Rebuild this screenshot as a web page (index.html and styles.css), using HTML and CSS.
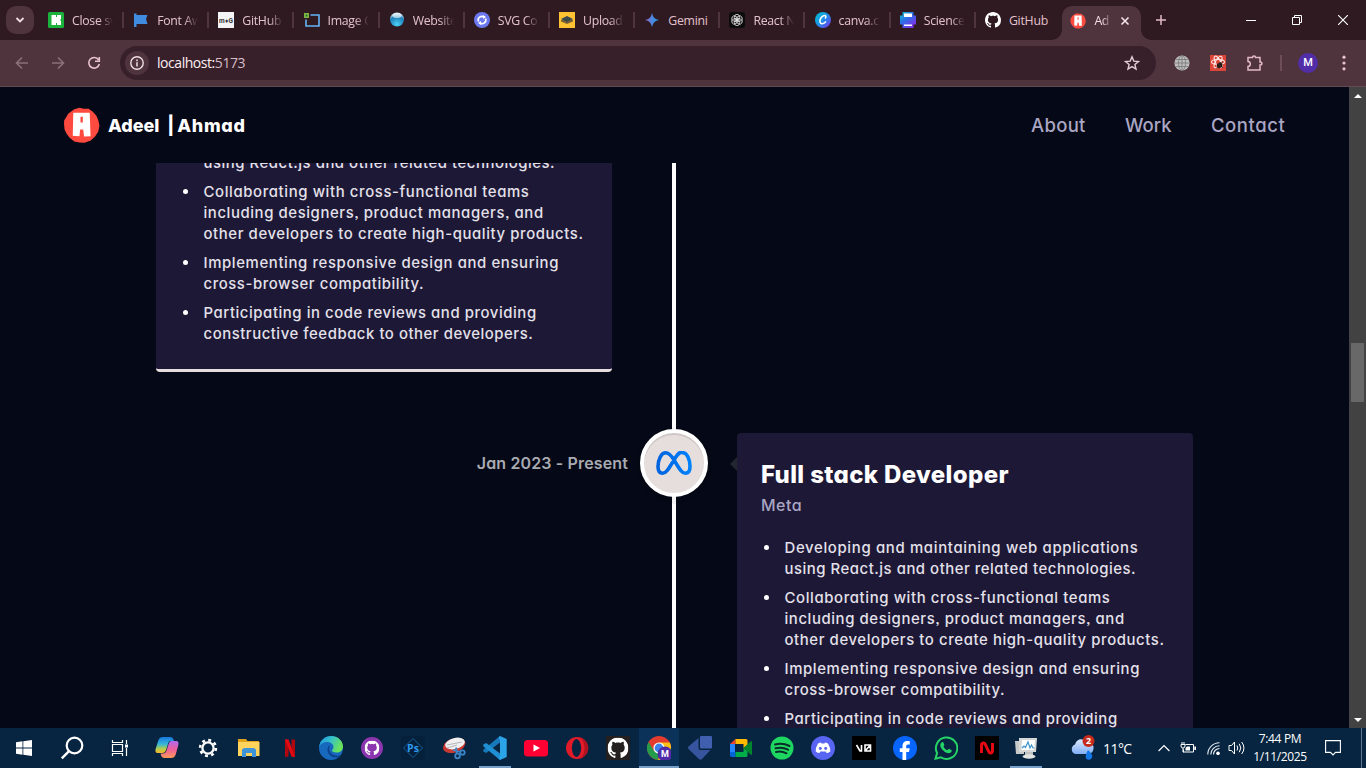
FILE: index.html
```html
<!DOCTYPE html>
<html lang="en">
<head>
<meta charset="utf-8">
<title>Adeel | Ahmad</title>
<link rel="stylesheet" href="styles.css">
</head>
<body>
<svg width="0" height="0" class="defs">
  <defs>
    <symbol id="gh" viewBox="0 0 16 16"><path fill="currentColor" d="M8 0C3.58 0 0 3.58 0 8c0 3.54 2.29 6.53 5.47 7.59.4.07.55-.17.55-.38 0-.19-.01-.82-.01-1.49-2.01.37-2.53-.49-2.69-.94-.09-.23-.48-.94-.82-1.13-.28-.15-.68-.52-.01-.53.63-.01 1.08.58 1.23.82.72 1.21 1.87.87 2.33.66.07-.52.28-.87.51-1.07-1.78-.2-3.64-.89-3.64-3.95 0-.87.31-1.59.82-2.15-.08-.2-.36-1.02.08-2.12 0 0 .67-.21 2.2.82.64-.18 1.32-.27 2-.27s1.36.09 2 .27c1.53-1.04 2.2-.82 2.2-.82.44 1.1.16 1.92.08 2.12.51.56.82 1.27.82 2.15 0 3.07-1.87 3.75-3.65 3.95.29.25.54.73.54 1.48 0 1.07-.01 1.93-.01 2.2 0 .21.15.46.55.38A8.01 8.01 0 0 0 16 8c0-4.42-3.58-8-8-8z"/></symbol>
    <symbol id="logo" viewBox="0 0 36 36"><path fill="#ff4a3f" d="M11 2.200L16 .8l4 .8 5 .2 4 2.700 3.500 4 1.800 4.500 1.200 5-1.200 6-3.300 5-4 3.500-6 2.300-5-.2-5-1.100-4.500-3.500-3-4L1.500 22 1 16l.2-3 1.600-2.500 2.200-4z"/><path fill="#fff" fill-rule="evenodd" d="M10 5.600L26 5.500 26.800 28.500 20.500 28.800 19.700 22H16.700L16 28.500 9.500 28zM17 9.500V15H19.300V9.500z"/></symbol>
    <linearGradient id="canva" x2="1" y2="1"><stop stop-color="#00c4cc"/><stop offset=".5" stop-color="#1f8fe8"/><stop offset="1" stop-color="#7d2ae8"/></linearGradient>
    <linearGradient id="sci" x2=".8" y2="1"><stop stop-color="#10c9c8"/><stop offset=".45" stop-color="#2b6fe8"/><stop offset="1" stop-color="#8a2be8"/></linearGradient>
    <linearGradient id="gem" x1="0" x2="1"><stop stop-color="#9168c0"/><stop offset=".5" stop-color="#4f86e0"/><stop offset="1" stop-color="#1ba1e3"/></linearGradient>
    <radialGradient id="globe" cx=".5" cy=".85" r=".85"><stop stop-color="#4dd2f5"/><stop offset=".65" stop-color="#1c7eb8"/><stop offset="1" stop-color="#e6f6ff"/></radialGradient>
    <linearGradient id="cop1" x2="0" y2="1"><stop stop-color="#1878e0"/><stop offset=".45" stop-color="#35b6d8"/><stop offset=".75" stop-color="#b8cf46"/><stop offset="1" stop-color="#f3b52c"/></linearGradient>
    <linearGradient id="cop2" x2="0" y2="1"><stop stop-color="#b06af0"/><stop offset=".5" stop-color="#ee5f9a"/><stop offset="1" stop-color="#ff9a55"/></linearGradient>
    <linearGradient id="edge1" x2="1" y2=".4"><stop stop-color="#1a8fdc"/><stop offset=".5" stop-color="#35c1c9"/><stop offset="1" stop-color="#6be25a"/></linearGradient>
    <linearGradient id="meta" x2="1"><stop stop-color="#0064e0"/><stop offset=".5" stop-color="#0070ec"/><stop offset="1" stop-color="#0082fb"/></linearGradient>
    <linearGradient id="cloud" x2="0" y2="1"><stop stop-color="#dce9ff"/><stop offset="1" stop-color="#80aef5"/></linearGradient>
  </defs>
</svg>

<div class="tabstrip">
  <button class="tab-search"><svg width="10" height="6" viewBox="0 0 10 6"><path d="M1.500 1L5 4.500 8.500 1" fill="none" stroke="#f3dde4" stroke-width="1.800"/></svg></button>
  <div class="tabs">
    <div class="tab"><svg viewBox="0 0 16 16"><rect width="16" height="16" rx="1.500" fill="#1bb13c"/><path fill="#fff" d="M3.500 3H8v2h1V3h4v4l-1 1 1 1v4H9v-2H8v2H3.500z"/></svg><span>Close sv</span></div>
    <div class="tab"><svg viewBox="0 0 16 16"><path fill="#3f8ce0" d="M1 1.500h2.500V3H14.500l-1.500 4 1.500 5H3.500v3H1z"/></svg><span>Font Aw</span></div>
    <div class="tab"><svg viewBox="0 0 16 16"><rect width="16" height="16" fill="#f4f4f6"/><text x="8" y="10.500" text-anchor="middle" font-size="6.500" font-weight="700" font-family="Roboto" textLength="14" fill="#34343c">m♦G</text></svg><span>GitHub</span></div>
    <div class="tab"><svg viewBox="0 0 16 16"><path fill="none" stroke="#64b5f6" stroke-width="1.600" d="M6.500 3H15v11H2V7.500"/><rect y="1" width="5" height="5" fill="#7cb342"/><rect x="1.700" y="2.700" width="1.600" height="1.600" fill="#263"/></svg><span>Image C</span></div>
    <div class="tab wide"><svg viewBox="0 0 16 16"><circle cx="8" cy="7.500" r="7" fill="url(#globe)"/><ellipse cx="8" cy="3.500" rx="4.500" ry="2.500" fill="#fff" opacity=".65"/></svg><span>Website</span></div>
    <div class="tab"><svg viewBox="0 0 16 16"><circle cx="8" cy="8" r="8" fill="#6c78f2"/><path fill="none" stroke="#fff" stroke-width="1.700" d="M4.500 9.500A3.700 3.700 0 0 1 10 5M11.500 6.500A3.700 3.700 0 0 1 6 11"/><path fill="#fff" d="M9 3l3 2-3 2zM7 9l-3 2 3 2z"/></svg><span>SVG Co</span></div>
    <div class="tab"><svg viewBox="0 0 16 16"><rect width="16" height="16" fill="#fec233"/><path fill="#786333" d="M2 8l6-2 6 2v1.500L8 12 2 9.500z"/><path fill="#3d4a4c" d="M2 7l6-3 6 3-6 3z"/></svg><span>Upload</span></div>
    <div class="tab"><svg viewBox="0 0 16 16"><path fill="url(#gem)" d="M8 1Q9 7 15 8 9 9 8 15 7 9 1 8 7 7 8 1z"/></svg><span>Gemini</span></div>
    <div class="tab"><svg viewBox="0 0 16 16"><rect width="16" height="16" rx="3" fill="#0b0b0c"/><g fill="none" stroke="#e4e4e4" stroke-width=".8"><ellipse cx="8" cy="5.500" rx="2.700" ry="3.200"/><ellipse cx="8" cy="5.500" rx="2.700" ry="3.200" transform="rotate(60 8 8)"/><ellipse cx="8" cy="5.500" rx="2.700" ry="3.200" transform="rotate(120 8 8)"/><ellipse cx="8" cy="5.500" rx="2.700" ry="3.200" transform="rotate(180 8 8)"/><ellipse cx="8" cy="5.500" rx="2.700" ry="3.200" transform="rotate(240 8 8)"/><ellipse cx="8" cy="5.500" rx="2.700" ry="3.200" transform="rotate(300 8 8)"/></g></svg><span>React N</span></div>
    <div class="tab"><svg viewBox="0 0 16 16"><circle cx="8" cy="8" r="8" fill="url(#canva)"/><path fill="none" stroke="#fff" stroke-width="1.500" d="M10 6.500c1.500-1.500 1-3.300-.8-3C6.500 4 4.500 7.500 5 10s3.500 2.500 6-.5"/></svg><span>canva.c</span></div>
    <div class="tab"><svg viewBox="0 0 16 16"><path fill="url(#sci)" d="M2.500 0h11v3.500H16v9h-2.500V16h-11v-3.500H0v-9h2.500z"/><path fill="#fff" d="M4 1.500h8V5H4zM4 12.500h8V14H4z"/></svg><span>Science</span></div>
    <div class="tab"><svg class="white"><use href="#gh"/></svg><span>GitHub</span></div>
    <div class="tab active"><svg><use href="#logo"/></svg><span>Ad</span><svg class="x" viewBox="0 0 10 10"><path d="M1.500 1.500l7 7M8.500 1.500l-7 7" stroke="#f7e3ea" stroke-width="1.600"/></svg></div>
  </div>
  <svg class="plus" viewBox="0 0 12 12"><path d="M6 1v10M1 6h10" stroke="#e4b9c8" stroke-width="1.500"/></svg>
  <div class="win">
    <svg viewBox="0 0 10 10"><path d="M0 5.500h10" stroke="#fff"/></svg>
    <svg viewBox="0 0 10 10"><path d="M.5 2.500h7v7h-7zM2.500 2.500v-2h7v7h-2" fill="none" stroke="#fff"/></svg>
    <svg viewBox="0 0 10 10"><path d="M0 0l10 10M10 0L0 10" stroke="#fff" stroke-width="1.100"/></svg>
  </div>
</div>

<div class="toolbar">
  <svg class="ic dim" viewBox="0 0 16 16"><path d="M14 8H3M8 2.500L2.500 8 8 13.500"/></svg>
  <svg class="ic dim" viewBox="0 0 16 16"><path d="M2 8h11M8 2.500L13.500 8 8 13.500"/></svg>
  <svg class="ic" viewBox="0 0 16 16"><path d="M12.500 4.800A5.300 5.300 0 1 0 13.300 9M13.300 2v4.300H9"/></svg>
  <div class="omnibox">
    <i class="info"><svg viewBox="0 0 16 16"><circle cx="8" cy="8" r="6.200" fill="none" stroke="#f0dfe5" stroke-width="1.400"/><path d="M8 7.200V11.500M8 4.600v1.600" stroke="#f0dfe5" stroke-width="1.500"/></svg></i>
    <span class="url"><b>localhost:</b>5173</span>
    <svg class="star" viewBox="0 0 16 16"><path d="M8 1.800l1.800 4.300 4.700.4-3.600 3 1.100 4.600L8 11.600l-4 2.500 1.100-4.600-3.600-3 4.700-.4z" fill="none" stroke="#e6ccd5" stroke-width="1.400"/></svg>
  </div>
  <svg class="ext" viewBox="0 0 16 16"><circle cx="8" cy="8" r="7.600" fill="#bdbdbd"/><g fill="none" stroke="#777" stroke-width=".8"><ellipse cx="8" cy="8" rx="3.500" ry="7.500"/><path d="M8 0v16M.5 8h15M2 4.500h12M2 11.500h12"/></g></svg>
  <svg class="ext" viewBox="0 0 16 16"><rect width="16" height="16" fill="#dc4437"/><g fill="none" stroke="#ffe9e6" stroke-width="1.100"><ellipse cx="8" cy="7" rx="6.500" ry="2.500"/><ellipse cx="8" cy="7" rx="6.500" ry="2.500" transform="rotate(60 8 7)"/><ellipse cx="8" cy="7" rx="6.500" ry="2.500" transform="rotate(120 8 7)"/></g><path d="M7 9l3.500-2 2 2-.5 3-3 1.500-2-1.500z" fill="#2a1a1a"/><path d="M6 13.500l7-7M6.500 9l6.500 3.500" stroke="#2a1a1a" stroke-width=".8"/></svg>
  <svg class="ext puzzle" viewBox="0 0 16 16"><path d="M1 2.500h4.500c0-2 3-2 3 0H13v4.500c2.500 0 2.500 3 0 3V15H1v-3.500c3 0 3-5 0-5z" fill="none" stroke="#e4b9c8" stroke-width="1.500"/></svg>
  <i class="sep"></i>
  <span class="avatar">M</span>
  <svg class="dots" viewBox="0 0 4 16"><circle cx="2" cy="2.200" r="1.600"/><circle cx="2" cy="8" r="1.600"/><circle cx="2" cy="13.800" r="1.600"/></svg>
</div>

<div class="viewport">
  <div class="page">
    <header class="site">
      <svg class="mark"><use href="#logo"/></svg>
      <p class="name"><span>Adeel&nbsp; </span>| <b>Ahmad</b></p>
      <nav><a class="n1">About</a><a class="n2">Work</a><a class="n3">Contact</a></nav>
    </header>
    <main class="timeline">
      <div class="row first">
        <article class="card">
          <ul>
            <li><span class="l2">using React.js and other related technologies.</span></li>
            <li><span class="l3">Collaborating with cross-functional teams</span><span class="l4">including designers, product managers, and</span><span class="l5">other developers to create high-quality products.</span></li>
            <li><span class="l6">Implementing responsive design and ensuring</span><span class="l7">cross-browser compatibility.</span></li>
            <li><span class="l8">Participating in code reviews and providing</span><span class="l9">constructive feedback to other developers.</span></li>
          </ul>
        </article>
      </div>
      <div class="row second">
        <p class="date"><span>Jan 2023 - Present</span></p>
        <div class="badge"><svg viewBox="0 0 36 24"><path d="M18 9C14.500 3.500 12.500 1.800 9.800 1.800 5 1.800 2 9 2 15.500c0 4 1.500 6.700 4.600 6.700C10 22.200 12 19 18 9S25 1.800 27 1.800c4 0 7 6.700 7 13.700 0 4-1.500 6.700-4.600 6.700C26 22.200 24 19 18 9z" fill="none" stroke="url(#meta)" stroke-width="3.600" stroke-linejoin="round"/></svg></div>
        <article class="card arrow">
          <h3><span>Full stack Developer</span></h3>
          <p class="company">Meta</p>
          <ul>
            <li><span class="l1">Developing and maintaining web applications</span><span class="l2">using React.js and other related technologies.</span></li>
            <li><span class="l3">Collaborating with cross-functional teams</span><span class="l4">including designers, product managers, and</span><span class="l5">other developers to create high-quality products.</span></li>
            <li><span class="l6">Implementing responsive design and ensuring</span><span class="l7">cross-browser compatibility.</span></li>
            <li><span class="l8">Participating in code reviews and providing</span></li>
          </ul>
        </article>
      </div>
    </main>
  </div>
  <div class="scrollbar"><svg viewBox="0 0 8 4"><path d="M4 0l4 4H0z" fill="#fff"/></svg><i class="thumb"></i><svg class="down" viewBox="0 0 8 4"><path d="M4 4l4-4H0z" fill="#fff"/></svg></div>
</div>

<footer class="taskbar">
  <div class="sys"><svg class="s16" viewBox="0 0 16 16"><path fill="#fff" d="M0 2.300L6.500 1.300V7.500H0zM7.300 1.200L16 0v7.500H7.300zM0 8.400h6.500v6.300L0 13.700zM7.300 8.400H16V16l-8.700-1.200z"/></svg></div>
  <div class="sys"><svg class="s24" viewBox="0 0 24 24"><circle cx="14.500" cy="9.500" r="7.800" fill="none" stroke="#fff" stroke-width="2.200"/><path d="M9 15.200L1.800 22.400" stroke="#fff" stroke-width="2.400"/></svg></div>
  <div class="sys"><svg class="s18" viewBox="0 0 18 18"><path fill="none" stroke="#fff" stroke-width="1.200" d="M1.500 5.500h10v7h-10zM1.500 1v2.500h10V1M1.500 17v-2.500h10V17M15.500 1v4M15.500 9v8"/><rect x="14" y="5.500" width="3" height="3" fill="#fff"/></svg></div>
  <div class="apps">
    <div><svg viewBox="0 0 24 24"><path fill="url(#cop1)" d="M8 1h7c2 0 3 1 3.500 3l.5 1h-3c-2 0-2.500 1-3 3l-2 6c-.8 2-1.500 3-3.500 3H3c-2.500 0-3-2-2.200-4.500l2.500-8C4.200 2 5.500 1 8 1z"/><path fill="url(#cop2)" d="M16 22H9.500C7.500 22 6.500 21 6 19l-.5-1.500H8c2 0 2.800-1 3.500-3l2-6C14.200 6 15 5 17 5h4c2.500 0 3 2 2.200 4.500l-2.500 9C19.800 21 18.500 22 16 22z"/></svg></div>
    <div><svg viewBox="0 0 24 24"><circle cx="12" cy="12" r="5.600" fill="none" stroke="#fff" stroke-width="2.300"/><circle cx="12" cy="12" r="7.900" fill="none" stroke="#fff" stroke-width="2.600" stroke-dasharray="2.900 3.305"/></svg></div>
    <div><svg viewBox="0 0 24 24"><path fill="#e0a21b" d="M1 3h8l1.500 2H22v4H1z"/><path fill="#ffd35c" d="M1 6h21.500v14H1z"/><path fill="#3f93d8" d="M5 21v-7.500L7 12h10l2 1.500V21h-4v-4H9v4z"/></svg></div>
    <div><svg viewBox="0 0 24 24"><path fill="#b1060f" d="M7 3.500h3.500v17L7 21zM13.500 3.500H17V21l-3.500-.5z"/><path fill="#e50914" d="M7 3.500h3.500L17 21l-3.500-.5z"/></svg></div>
    <div><svg viewBox="0 0 24 24"><circle cx="12" cy="12" r="12" fill="#1769bd"/><path fill="url(#edge1)" d="M.2 11C1 4 6 0 12 0c7 0 12 5 12 10.500 0 4-3 6-6.500 6-3 0-4.500-1-4.500-2 0-.8 1.500-1.500 1.500-3.500 0-3-3-5-6.500-5-4 0-7 2.500-7.800 5z"/><path fill="#0d438f" d="M9.500 10c-3 5 1 12 8 11.500 2-.1 4-1.500 4.800-2.500-5 2-12-.5-12-6.500 0-1 .2-2 .7-3z"/></svg></div>
    <div><svg viewBox="0 0 24 24"><circle cx="12" cy="12" r="11" fill="#8b36ae"/><svg x="4.500" y="4.500" width="15" height="15" color="#fff"><use href="#gh"/></svg></svg></div>
    <div><svg viewBox="0 0 24 24"><rect width="24" height="24" rx="3" fill="#05203a"/><path d="M12 2.500L21.500 12 12 21.500 2.500 12z" fill="none" stroke="#16609b"/><text x="12" y="16" text-anchor="middle" font-size="10.500" font-weight="700" font-family="Open Sans" fill="#2d9bf0">Ps</text></svg></div>
    <div><svg viewBox="0 0 24 24"><ellipse cx="12" cy="9.500" rx="11.500" ry="7" transform="rotate(-18 12 9)" fill="#c93a35"/><ellipse cx="13" cy="7.500" rx="10" ry="5.500" transform="rotate(-14 13 7.500)" fill="#f0f0f0"/><path d="M5 9l15-3M5 12l10-3" stroke="#b6b6bd"/><g fill="none" stroke="#3b86c8" stroke-width="1.800"><circle cx="15.500" cy="20" r="2.300"/><circle cx="20.500" cy="16.500" r="2.200"/><path d="M15 17.500l-1-6M18 16l-7-2"/></g></svg></div>
    <div class="run"><svg viewBox="0 0 24 24"><path fill="#1779ba" d="M17 0v6.500L3.200 17 .3 15.500v-1.700z"/><path fill="#1f8fd4" d="M17 24v-6.500L3.200 7 .3 8.500v1.700z"/><path fill="#2ba4e8" d="M17 0l6.700 3v18L17 24l-1.300-1.500L17 20V4l-1.300-2.500z"/></svg></div>
    <div><svg viewBox="0 0 24 24"><rect y="4" width="24" height="16.500" rx="3.500" fill="#ff0033"/><path fill="#fff" d="M9.500 8.500v7l6.500-3.500z"/></svg></div>
    <div><svg viewBox="0 0 24 24"><ellipse cx="12" cy="12" rx="11" ry="11" fill="#e21b2b"/><path fill="#ad1422" d="M15 1.300A11 11 0 0 1 15 22.700c6-4 6-17 0-21.400z"/><ellipse cx="11.500" cy="12" rx="4.600" ry="9" fill="#072540"/></svg></div>
    <div><svg viewBox="0 0 24 24"><rect width="24" height="24" fill="#24201f"/><svg x="1.500" y="1.500" width="21" height="21" color="#fff"><use href="#gh"/></svg></svg></div>
    <div class="run current"><svg viewBox="0 0 24 24"><circle cx="12" cy="12" r="12" fill="#e33b2e"/><path fill="#249c4b" d="M1.600 6L7 15l5 2.500L11 24A12 12 0 0 1 1.600 6z"/><path fill="#fbc116" d="M12 6.500h10.700A12 12 0 0 1 11 24l5.500-9z"/><circle cx="12" cy="12" r="5.600" fill="#fff"/><circle cx="12" cy="12" r="4.400" fill="#3e82ee"/><circle cx="18" cy="18" r="7.500" fill="#502ba8"/><text x="18" y="21.300" text-anchor="middle" font-size="9" font-weight="700" font-family="Roboto" fill="#fff">M</text></svg></div>
    <div><svg viewBox="0 0 24 24"><path fill="#405fae" d="M13 0h10q1 0 1 1v10.500q0 1-1 1H13q-1 0-1-1V1q0-1 1-1z"/><path fill="#37549f" d="M.5 10.500L10.500 2V12q0 2 2 2H22.500L14 23q-1.500 1.500-3 0L.5 13q-1-1.200 0-2.500z"/></svg></div>
    <div><svg viewBox="0 0 24 24"><path fill="#2684fc" d="M1 8h5v8H1z"/><path fill="#ea4335" d="M1 8l5.500-5v5z"/><path fill="#ffba00" d="M6.500 3H17q1.500 0 1.500 1.500V9l-4 3V8h-8z"/><path fill="#0066da" d="M1 16h5.500v5H3q-2 0-2-2z"/><path fill="#00ac47" d="M6.500 16h8v-4l4 3v4.500q0 1.500-1.500 1.500H6.500z"/><path fill="#00832d" d="M14.500 12l7-6.500q1.500-1 1.500.5v12q0 1.500-1.500.5z"/></svg></div>
    <div><svg viewBox="0 0 24 24"><circle cx="12" cy="12" r="11.500" fill="#1ed760"/><path d="M5 8.500q7.500-2 14.500 1.500M5.500 12.300q6.500-1.800 12.500 1.400M6 16q5.500-1.300 10.500 1.300" fill="none" stroke="#0b2b2a" stroke-width="2" stroke-linecap="round"/></svg></div>
    <div><svg viewBox="0 0 24 24"><circle cx="12" cy="12" r="12" fill="#5865f2"/><path fill="#fff" d="M7 7.500q2-1 3-1l.5 1h3l.5-1q1 0 3 1 2.500 4 2.300 8-2 1.500-3.800 1.500l-.8-1.500h-5.400l-.8 1.500q-1.800 0-3.800-1.500Q4.500 11.500 7 7.500z"/><ellipse cx="9.300" cy="12.300" rx="1.400" ry="1.600" fill="#5865f2"/><ellipse cx="14.700" cy="12.300" rx="1.400" ry="1.600" fill="#5865f2"/></svg></div>
    <div><svg viewBox="0 0 24 24"><rect width="24" height="24" fill="#000"/><path d="M4.500 9l3.500 6h1.500V9M13 9h5.500v6H13zM13 15l5.500-6" fill="none" stroke="#fff" stroke-width="1.600"/></svg></div>
    <div><svg viewBox="0 0 24 24"><circle cx="12" cy="12" r="12" fill="#0866ff"/><path fill="#fff" d="M9.500 24v-8H6.800v-3.700h2.700v-1.800C9.500 6.500 11.500 5 14.500 5c1 0 1.800.1 2.300.2v3.300h-1.600c-1.600 0-2 .8-2 2v1.800h3.500L16 16h-2.800v8z"/></svg></div>
    <div><svg viewBox="0 0 24 24"><path fill="none" stroke="#25d366" stroke-width="2" d="M1.500 22.700l1.600-5.600A10.700 10.700 0 1 1 7 21.300z"/><path fill="#25d366" d="M7.500 6.500c.8-.8 1.700-.6 2 .2l.8 2c.2.500-.8 1.400-.9 1.700.8 1.900 2.200 3.100 4 3.800.6-.3 1.200-1.600 1.800-1.300l2.200 1.100c.6.400.2 1.900-.6 2.600-2 1.500-5 .5-7.500-2-3-2.800-4-6-1.800-8.100z"/></svg></div>
    <div><svg viewBox="0 0 24 24"><rect width="24" height="24" fill="#000"/><path d="M6.500 17V9.500C6.500 6.500 9.500 6 10.500 9l3 6c1 3 4 2.500 4-.5V7" fill="none" stroke="#e50914" stroke-width="3"/></svg></div>
    <div class="run last"><svg viewBox="0 0 24 24"><path fill="#c7c9c8" d="M1 5h9v13H2z"/><path fill="#d4d7d6" d="M5 2h18l-1 14H5z"/><path fill="#fff" d="M8 4h13l-.8 10H7.500z"/><path fill="none" stroke="#3f94c9" stroke-width="1.200" d="M8 12l2-2 1.500 1.500L14 6l2 6 1.500-3 1.500 3h1.500"/><path fill="#bfc2c1" d="M11 16h8v3H11z"/><ellipse cx="15" cy="20.500" rx="6.500" ry="2.200" fill="#e2e4e2"/></svg></div>
  </div>
  <div class="tray">
    <svg class="weather" viewBox="0 0 26 26"><path fill="url(#cloud)" d="M5.500 19a5 5 0 0 1-.5-9.500C7 3 14 3 16 7.500c5-1 8 2 7.500 6-.3 4-3 5.500-6 5.500z"/><path fill="#1478e8" d="M18 15q6 5 3.500 8.500-2.500 2.500-5.500 0-1-3.500 2-8.500z"/><circle cx="18.500" cy="6" r="6" fill="#c42b1c"/><text x="18.500" y="9.300" text-anchor="middle" font-size="9" font-weight="700" font-family="Open Sans" fill="#fff">2</text></svg>
    <span class="temp">11°C</span>
    <svg class="chev" viewBox="0 0 12 8"><path d="M.6 7L6 1.500 11.400 7" fill="none" stroke="#fff" stroke-width="1.200"/></svg>
    <svg class="batt" viewBox="0 0 16 12"><path fill="none" stroke="#fff" d="M5.500 2.500h8v7.500H3.500V7.500M1 2.500h4v1.500q0 2-2 2t-2-2zM2 0v2M4 0v2M3 6v4h1"/><path fill="#fff" d="M7 4.500h3V8.500H5.500V6zM14.300 4.500H16V8h-1.700z"/></svg>
    <svg class="wifi" viewBox="0 0 13 13"><g fill="none" stroke="#e8edf3" stroke-width="1.100"><path d="M.8 12.500A11.700 11.700 0 0 1 12.500.8M3.800 12.500A8.700 8.700 0 0 1 12.500 3.800M6.500 12.500a6 6 0 0 1 6-6"/></g><circle cx="11" cy="11.300" r="1.800" fill="#fff"/></svg>
    <svg class="vol" viewBox="0 0 17 14"><path fill="none" stroke="#fff" d="M1 4.500h2.500l3-3.500v12l-3-3.500H1zM9 4.500q1.500 2.500 0 5M11.300 2.800q3 4.200 0 8.400M13.700 1q4.500 6 0 12"/></svg>
    <div class="clock"><span class="c1">7:44 PM</span><span class="c2">1/11/2025</span></div>
    <svg class="notif" viewBox="0 0 16 16"><path fill="none" stroke="#fff" stroke-width="1.100" d="M.6.6h14.800v11.800H10.500L8 15l-2.500-2.600H.6z"/></svg>
    <i class="desk"></i>
  </div>
</footer>
</body>
</html>
```
FILE: styles.css
```css
* { box-sizing: border-box; }
body { margin: 0; width: 1366px; height: 768px; overflow: hidden; display: flex; flex-direction: column; background: #050816; font-family: "Open Sans", "Noto Sans", sans-serif; }
.defs { position: absolute; }
svg { display: block; flex: none; }

.tabstrip { height: 40px; flex: none; background: #2f1a22; display: flex; align-items: center; padding-left: 6px; }
.tab-search { width: 28px; height: 28px; border: 0; padding: 0; border-radius: 10px; background: #4f343e; display: flex; align-items: center; justify-content: center; }
.tabs { display: flex; align-items: center; height: 40px; margin-left: 14px; }
.tab { width: 85.180px; height: 16px; display: flex; align-items: center; gap: 8px; position: relative; background: linear-gradient(#50353f, #50353f) 74px 0 / 2px 16px no-repeat; }
.tab svg { width: 16px; height: 16px; }
.tab span { width: 50px; padding-top: 1px; overflow: hidden; white-space: nowrap; font-size: 12.300px; line-height: 16px; letter-spacing: -0.300px; color: #e4c2cd; margin-right: -12px; -webkit-mask-image: linear-gradient(90deg, #000 27px, transparent 41px); mask-image: linear-gradient(90deg, #000 27px, transparent 41px); }
.tab:nth-child(8) span, .tab:nth-child(12) span { letter-spacing: -0.250px; -webkit-mask-image: none; mask-image: none; }
.tab .white { color: #fff; }
.tab:nth-child(12) { background: none; width: 77.500px; }
.tab.active { width: 78.500px; height: 34px; margin-top: 6px; padding: 0 0 5px 8px; border-radius: 10px 10px 0 0; background: #4f343e; }
.tab.active::before, .tab.active::after { content: ""; position: absolute; bottom: 0; width: 10px; height: 10px; }
.tab.active::before { left: -10px; background: radial-gradient(circle at 0 0, transparent 9.500px, #4f343e 10px); }
.tab.active::after { right: -10px; background: radial-gradient(circle at 100% 0, transparent 9.500px, #4f343e 10px); }
.tab.active span { width: 17px; margin: 0; color: #f3dde4; -webkit-mask-image: linear-gradient(90deg, #000 8px, transparent 18px); mask-image: linear-gradient(90deg, #000 8px, transparent 18px); }
.tab.active .x { width: 10px; height: 10px; margin-left: 1px; }
.plus { width: 12px; height: 12px; margin-left: 14px; }
.win { margin-left: auto; display: flex; gap: 36px; padding-right: 18px; }
.win svg { width: 10px; height: 10px; }

.toolbar { height: 47px; flex: none; background: #4f343e; border-bottom: 1px solid #624a52; display: flex; align-items: center; padding: 0 0 0 14px; }
.ic { width: 16px; height: 16px; margin-right: 20px; fill: none; stroke: #e9c4d0; stroke-width: 1.600; }
.dim { stroke: #8b6f79; }
.omnibox { width: 1036px; height: 34px; margin-left: -2px; border-radius: 17px; background: #38202a; display: flex; align-items: center; padding: 0 16px 0 5px; }
.info { width: 24px; height: 24px; border-radius: 50%; background: #4f343e; display: flex; align-items: center; justify-content: center; }
.info svg { width: 16px; height: 16px; }
.url { margin-left: 8px; margin-top: -1px; font-size: 14px; letter-spacing: -0.450px; color: #d6bec7; }
.url b { font-weight: 400; color: #fdeef3; }
.star { width: 16px; height: 16px; margin-left: auto; }
.ext { width: 16px; height: 16px; margin-left: 20px; }
.omnibox + .ext { margin-left: 18px; }
.ext.puzzle { margin-left: 21px; }
.sep { width: 2px; height: 16px; background: #6c4d59; margin: 0 17px 0 17px; }
.avatar { width: 20px; height: 20px; margin-left: -1px; border-radius: 50%; background: #512da8; color: #fff; font: 500 11px/20px Roboto, sans-serif; text-align: center; }
.dots { width: 4px; height: 16px; margin-left: 24px; fill: #e9c4d0; }

.viewport { height: 641px; flex: none; display: flex; overflow: hidden; }
.page { width: 1349px; height: 641px; overflow: hidden; background: #050816; font-family: Inter, sans-serif; font-feature-settings: "cv11", "ss03"; }
.site { height: 76px; display: flex; align-items: center; padding: 0 64px 0 63px; color: #fff; }
.mark { width: 37px; height: 37px; }
.name { margin: 0 0 0 8px; font-size: 18px; font-weight: 800; white-space: nowrap; }
.name span { letter-spacing: 0; }
.name b { font-weight: 800; margin-left: -1px; letter-spacing: 0.700px; }
nav { margin-left: auto; display: flex; gap: 40px; color: #aaa6c3; font-size: 18.500px; font-weight: 500; }
nav a { white-space: nowrap; }
.n1 { width: 54px; letter-spacing: 0.300px; } .n2 { width: 46px; letter-spacing: 0; } .n3 { width: 74px; letter-spacing: 0.550px; }
.timeline { height: 565px; overflow: hidden; background: linear-gradient(#fff, #fff) 672px 0 / 4px 100% no-repeat; }
.row { display: flex; }
.card { width: 456px; background: #1d1836; color: #fff; border-radius: 4px; border-bottom: 3px solid #e6dede; padding: 24px; }
.card ul { margin: 20px 0 0; padding: 0 0 0 23.500px; list-style: none; }
.card li { position: relative; font-size: 14.900px; font-weight: 500; line-height: 21px; color: #e4e1ea; }
.card li + li { margin-top: 8px; }
.card li::before { content: ""; position: absolute; left: -21px; top: 8px; width: 5px; height: 5px; border-radius: 50%; background: #fff; }
.card li span { display: block; white-space: nowrap; padding-top: 1px; margin-bottom: -1px; }
.l1 { letter-spacing: 0.670px; }
.l2 { letter-spacing: 0.530px; }
.l3 { letter-spacing: 0.620px; }
.l4 { letter-spacing: 0.590px; }
.l5 { letter-spacing: 0.600px; }
.l6 { letter-spacing: 0.620px; }
.l7 { letter-spacing: 0.570px; }
.l8 { letter-spacing: 0.570px; }
.l9 { letter-spacing: 0.540px; }
.first { padding-left: 156px; }
.first .card { height: 209px; padding-top: 0; border-radius: 0 0 4px 4px; }
.first ul { margin-top: -11px; }
.first li:first-child::before { display: none; }
.second { margin-top: 61px; height: 400px; align-items: flex-start; }
.date { width: 640px; margin: 0; padding: 18px 12px 0 0; text-align: right; font-size: 16px; line-height: 24px; font-weight: 600; letter-spacing: 0.140px; color: #a9abb2; }
.badge { width: 68px; height: 68px; margin-top: -4px; border-radius: 50%; background: #e6dedd; border: 4px solid #fff; box-shadow: inset 0 2px 0 rgba(0,0,0,.1), 0 3px 0 4px rgba(0,0,0,.05); display: flex; align-items: center; justify-content: center; }
.badge svg { width: 36px; height: 24px; }
.arrow { position: relative; margin-left: 29px; }
.arrow::before { content: ""; position: absolute; left: -7px; top: 24px; border: 7px solid transparent; border-left: 0; border-right-color: #232631; }
h3 { margin: 0; font-size: 24px; line-height: 36px; font-weight: 800; letter-spacing: 0.360px; }
.company { margin: 0; font-size: 16px; line-height: 24px; font-weight: 500; letter-spacing: 0.500px; color: #aaa6c3; }
.scrollbar { width: 17px; background: #424242; display: flex; flex-direction: column; align-items: center; padding: 7px 0 6px; }
.scrollbar svg { width: 8px; height: 4px; }
.thumb { width: 13px; height: 59px; background: #686868; margin-top: 245px; }
.scrollbar .down { margin-top: auto; }

.taskbar { height: 40px; flex: none; background: #072540; display: flex; color: #fff; }
.sys { width: 48px; display: flex; align-items: center; justify-content: center; }
.s16 { width: 16px; height: 16px; } .s24 { width: 24px; height: 24px; } .s18 { width: 18px; height: 18px; }
.apps { display: flex; gap: 1px; padding-left: 3px; }
.apps div { width: 40px; height: 40px; display: flex; align-items: center; justify-content: center; }
.apps div > svg { width: 24px; height: 24px; }
.apps .run { background: linear-gradient(#76a0c8, #76a0c8) 50% 100% / 32px 2px no-repeat; }
.apps .current { background: linear-gradient(#76a0c8, #76a0c8) 0 100% / 40px 2px no-repeat #0b3259; }
.apps .last { margin-left: -2px; }
.tray { margin-left: auto; display: flex; align-items: center; height: 40px; }
.weather { width: 26px; height: 26px; }
.temp { width: 30px; margin-left: 7px; font-size: 14px; letter-spacing: -0.550px; white-space: nowrap; }
.chev { width: 12px; height: 8px; margin-left: 25px; }
.batt { width: 16px; height: 12px; margin-left: 10px; }
.wifi { width: 13px; height: 13px; margin-left: 11px; }
.vol { width: 17px; height: 14px; margin-left: 8px; }
.clock { width: 60px; margin-left: 5px; display: flex; flex-direction: column; align-items: center; font-size: 12px; line-height: 18px; letter-spacing: -0.350px; white-space: nowrap; }
.notif { width: 16px; height: 16px; margin-left: 15px; }
.desk { width: 1px; height: 40px; margin: 0 4px 0 20px; background: #60788e; }
```
